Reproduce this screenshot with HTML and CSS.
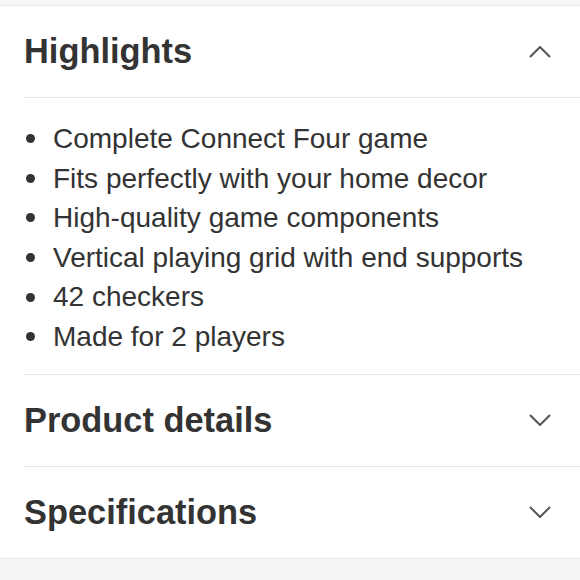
FILE: index.html
```html
<!DOCTYPE html>
<html lang="en">
<head>
<meta charset="utf-8">
<link rel="stylesheet" href="styles.css">
</head>
<body>
<div class="topband"></div>
<div class="accordion">
  <section class="item">
    <div class="header">
      <h2 class="title">Highlights</h2>
      <svg class="chev" width="22" height="12" viewBox="0 0 22 12"><path d="M1 11 L11 1 L21 11" fill="none" stroke="#555" stroke-width="2"/></svg>
    </div>
    <ul class="panel">
      <li>Complete Connect Four game</li>
      <li>Fits perfectly with your home decor</li>
      <li>High-quality game components</li>
      <li>Vertical playing grid with end supports</li>
      <li>42 checkers</li>
      <li>Made for 2 players</li>
    </ul>
  </section>
  <section class="item">
    <div class="header">
      <h2 class="title">Product details</h2>
      <svg class="chev" width="22" height="12" viewBox="0 0 22 12"><path d="M1 1 L11 11 L21 1" fill="none" stroke="#555" stroke-width="2"/></svg>
    </div>
  </section>
  <section class="item last">
    <div class="header">
      <h2 class="title">Specifications</h2>
      <svg class="chev" width="22" height="12" viewBox="0 0 22 12"><path d="M1 1 L11 11 L21 1" fill="none" stroke="#555" stroke-width="2"/></svg>
    </div>
  </section>
</div>
<div class="bottomband"></div>
</body>
</html>
```
FILE: styles.css
```css
html, body {
  margin: 0;
  padding: 0;
  background: #ffffff;
  font-family: "Liberation Sans", Arial, sans-serif;
  color: #333333;
}
.topband {
  height: 5px;
  background: #f5f5f5;
  border-bottom: 1px solid #ebebeb;
}
.accordion {
  padding-left: 24px;
}
.item {
  border-bottom: 1px solid #e6e6e6;
}
.item.last {
  border-bottom: none;
}
.header {
  height: 91px;
  display: flex;
  align-items: center;
  justify-content: space-between;
  padding-right: 29px;
}
.title {
  margin: 0;
  font-size: 34.4px;
  font-weight: bold;
  color: #333333;
}
.chev {
  display: block;
}
.panel {
  list-style: none;
  margin: 0;
  padding: 21px 0 17px 0;
  border-top: 1px solid #e6e6e6;
}
.panel li {
  display: flex;
  align-items: center;
  font-size: 28px;
  line-height: 39.6px;
  color: #333333;
}
.panel li::before {
  content: "";
  width: 9px;
  height: 9px;
  border-radius: 50%;
  background: #333333;
  margin-left: 2px;
  margin-right: 18px;
  flex: none;
}
.bottomband {
  height: 22px;
  background: #f5f5f5;
  border-top: 1px solid #ebebeb;
}
```
